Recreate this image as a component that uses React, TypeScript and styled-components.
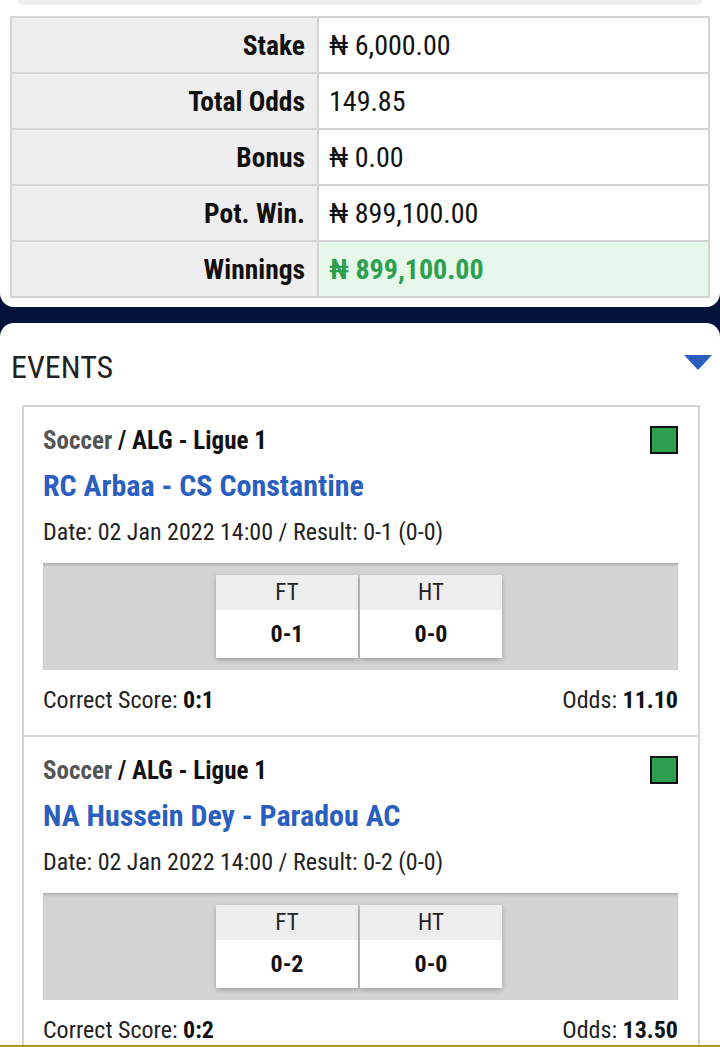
import React from "react";
import styled, { createGlobalStyle } from "styled-components";

const FONT = `"Roboto Condensed", "Liberation Sans Narrow", "DejaVu Sans Condensed", Roboto, sans-serif`;

const GlobalStyle = createGlobalStyle`
  html, body {
    margin: 0;
    padding: 0;
    background: #02123b;
    font-family: ${FONT};
    color: #1a1a1a;
  }
  * { box-sizing: border-box; }
`;

const Page = styled.div`
  display: flex;
  flex-direction: column;
  gap: 16px;
  min-height: 1047px;
  padding-bottom: 2px;
`;

const SummaryCard = styled.section`
  background: #fff;
  border-radius: 0 0 14px 14px;
  padding: 0 10px 9px;
  display: flex;
  flex-direction: column;
  gap: 11px;
`;

const PrevBox = styled.div`
  height: 5px;
  margin: 0 8px;
  background: #eeeeee;
  border-radius: 0 0 12px 12px;
`;

const Table = styled.table`
  width: 100%;
  border-collapse: collapse;
  border: 2px solid #d4d4d4;
`;

const Label = styled.th`
  width: 307px;
  height: 56px;
  padding: 0 12px 0 0;
  text-align: right;
  font-size: 27.5px;
  font-weight: 700;
  color: #111;
  background: #eeeeee;
  border: 2px solid #d4d4d4;
`;

const Value = styled.td<{ $win?: boolean }>`
  height: 56px;
  padding: 0 0 0 10px;
  font-size: 28px;
  font-weight: ${(p) => (p.$win ? 700 : 400)};
  color: ${(p) => (p.$win ? "#2e9e4f" : "#111")};
  background: ${(p) => (p.$win ? "#e6f8ea" : "#fff")};
  border: 2px solid #d4d4d4;
`;

const EventsCard = styled.section`
  flex: 1;
  background: #fff;
  border-radius: 14px 14px 0 0;
  padding: 0 20px 0 22px;
`;

const EventsHead = styled.div`
  display: flex;
  align-items: center;
  justify-content: space-between;
  height: 82px;
  margin: 0 -12px 0 -11px;
  padding-top: 5px;
  font-size: 32px;
  color: #222;
`;

const Caret = styled.span`
  width: 0;
  height: 0;
  margin-bottom: 8px;
  border-left: 14px solid transparent;
  border-right: 14px solid transparent;
  border-top: 15px solid #2a5fc0;
`;

const EventList = styled.div`
  border: 2px solid #d4d4d4;
  border-bottom: none;
`;

const Event = styled.article`
  padding: 18px 20px 0 19px;
  height: 330px;
  border-bottom: 2px solid #d4d4d4;
  display: flex;
  flex-direction: column;
`;

const LeagueRow = styled.div`
  display: flex;
  align-items: center;
  justify-content: space-between;
  height: 30px;
  font-size: 25px;
  font-weight: 700;
  color: #111;
`;

const Sport = styled.span`
  color: #555;
`;

const Status = styled.span`
  width: 28px;
  height: 28px;
  background: #2e9e4f;
  border: 2px solid #111;
`;

const Teams = styled.div`
  margin-top: 13px;
  height: 36px;
  line-height: 36px;
  font-size: 30px;
  font-weight: 700;
  color: #2a5fc0;
`;

const Meta = styled.div`
  margin-top: 13px;
  height: 30px;
  line-height: 30px;
  font-size: 24px;
  color: #222;
`;

const ScoreBox = styled.div`
  margin-top: 16px;
  height: 107px;
  background: #d4d4d4;
  box-shadow: inset 0 3px 3px -1px rgba(0, 0, 0, 0.18);
  display: flex;
  justify-content: center;
  align-items: center;
  gap: 2px;
  padding-right: 3px;
`;

const ScoreCell = styled.div`
  width: 142px;
  display: flex;
  flex-direction: column;
  box-shadow: 0 2px 5px rgba(0, 0, 0, 0.25);
`;

const ScoreHead = styled.div`
  height: 35px;
  background: #eeeeee;
  display: flex;
  align-items: center;
  justify-content: center;
  font-size: 23px;
  color: #222;
`;

const ScoreVal = styled.div`
  height: 48px;
  background: #fff;
  display: flex;
  align-items: center;
  justify-content: center;
  font-size: 24px;
  font-weight: 700;
  color: #111;
`;

const Foot = styled.div`
  margin-top: 15px;
  height: 30px;
  line-height: 30px;
  display: flex;
  justify-content: space-between;
  font-size: 24px;
  color: #222;

  b {
    color: #111;
  }
`;

const BottomLine = styled.div`
  position: fixed;
  left: 0;
  right: 0;
  bottom: 0;
  height: 2px;
  background: #b8902a;
`;

const rows = [
  { label: "Stake", value: "₦ 6,000.00" },
  { label: "Total Odds", value: "149.85" },
  { label: "Bonus", value: "₦ 0.00" },
  { label: "Pot. Win.", value: "₦ 899,100.00" },
  { label: "Winnings", value: "₦ 899,100.00", win: true },
];

const events = [
  {
    teams: "RC Arbaa - CS Constantine",
    result: "0-1 (0-0)",
    ft: "0-1",
    ht: "0-0",
    pick: "0:1",
    odds: "11.10",
  },
  {
    teams: "NA Hussein Dey - Paradou AC",
    result: "0-2 (0-0)",
    ft: "0-2",
    ht: "0-0",
    pick: "0:2",
    odds: "13.50",
  },
];

export default function App() {
  return (
    <>
      <GlobalStyle />
      <Page>
        <SummaryCard>
          <PrevBox />
          <Table>
            <tbody>
              {rows.map((r) => (
                <tr key={r.label}>
                  <Label>{r.label}</Label>
                  <Value $win={r.win}>{r.value}</Value>
                </tr>
              ))}
            </tbody>
          </Table>
        </SummaryCard>

        <EventsCard>
          <EventsHead>
            <span>EVENTS</span>
            <Caret />
          </EventsHead>
          <EventList>
            {events.map((e) => (
              <Event key={e.teams}>
                <LeagueRow>
                  <span>
                    <Sport>Soccer</Sport> / ALG - Ligue 1
                  </span>
                  <Status />
                </LeagueRow>
                <Teams>{e.teams}</Teams>
                <Meta>Date: 02 Jan 2022 14:00 / Result: {e.result}</Meta>
                <ScoreBox>
                  <ScoreCell>
                    <ScoreHead>FT</ScoreHead>
                    <ScoreVal>{e.ft}</ScoreVal>
                  </ScoreCell>
                  <ScoreCell>
                    <ScoreHead>HT</ScoreHead>
                    <ScoreVal>{e.ht}</ScoreVal>
                  </ScoreCell>
                </ScoreBox>
                <Foot>
                  <span>
                    Correct Score: <b>{e.pick}</b>
                  </span>
                  <span>
                    Odds: <b>{e.odds}</b>
                  </span>
                </Foot>
              </Event>
            ))}
          </EventList>
        </EventsCard>
      </Page>
      <BottomLine />
    </>
  );
}
